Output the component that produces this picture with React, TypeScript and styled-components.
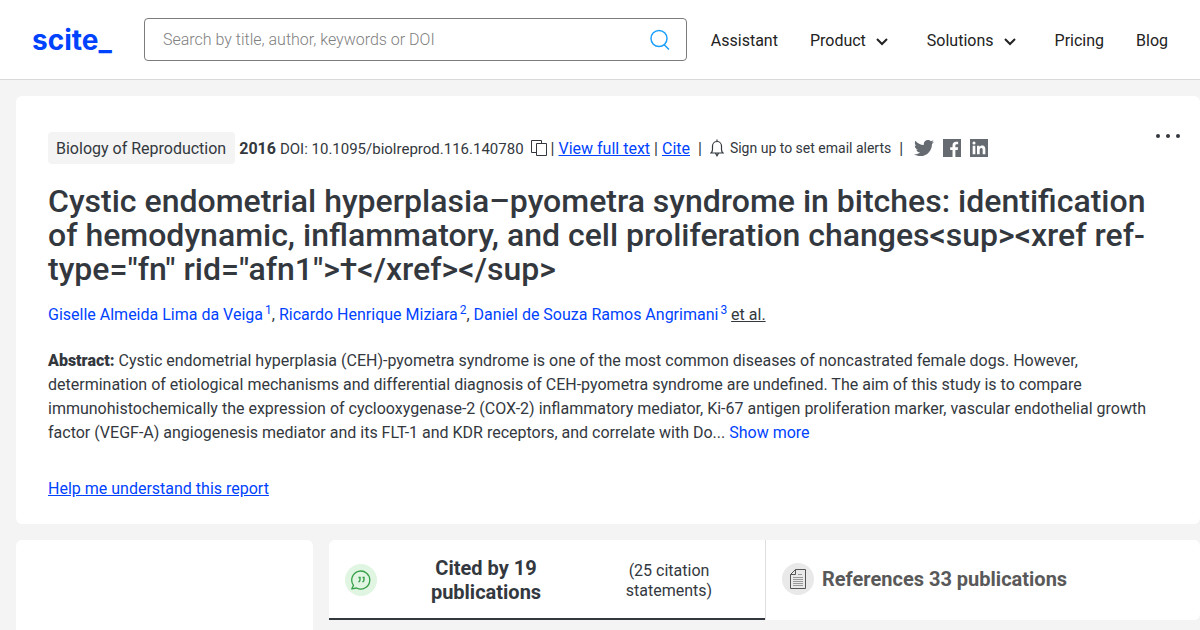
import React from 'react';
import styled, { createGlobalStyle } from 'styled-components';
import { FaTwitter } from 'react-icons/fa';

const GlobalStyle = createGlobalStyle`
  * { box-sizing: border-box; }
  body {
    margin: 0;
    background: #f4f4f4;
    color: #33383e;
    font-family: Roboto, "Liberation Sans", sans-serif;
    font-size: 16px;
    line-height: 24px;
  }
  a { color: #0043ff; text-decoration: none; }
  button { font: inherit; color: inherit; background: none; border: 0; padding: 0; cursor: pointer; }
  svg { display: block; flex: none; }
`;

const Page = styled.div`
  overflow-x: hidden;
`;

const Header = styled.header`
  display: flex;
  align-items: center;
  height: 80px;
  padding: 0 32px;
  background: #fff;
  border-bottom: 1px solid #d9d9d9;
`;

const Logo = styled.a`
  flex: none;
  width: 112px;
  font-family: Inter, sans-serif;
  font-size: 28px;
  line-height: 40px;
  font-weight: 700;
`;

const Search = styled.form`
  display: flex;
  align-items: center;
  flex: 1;
  min-width: 0;
  height: 43px;
  padding: 0 16px 0 18px;
  border: 1px solid #7c7c7c;
  border-radius: 4px;
`;

const SearchInput = styled.input`
  flex: 1;
  min-width: 0;
  padding: 0;
  border: 0;
  outline: 0;
  background: none;
  font: inherit;
  font-weight: 300;
  color: #33383e;
  &::placeholder { color: #808080; opacity: 1; }
`;

const Nav = styled.nav`
  display: flex;
  align-items: center;
  gap: 32px;
  margin-left: 24px;
  padding-top: 2px;
`;

const NavLink = styled.a`
  color: #222;
`;

const NavMenu = styled.button`
  display: flex;
  align-items: center;
  gap: 8px;
  && { color: #222; margin-right: 5px; }
`;

const Main = styled.main`
  display: flex;
  flex-direction: column;
  gap: 16px;
  padding: 16px 0 0 16px;
`;

const Card = styled.section`
  background: #fff;
  border-radius: 6px;
`;

const Paper = styled(Card)`
  padding: 36px 32px 23px;
`;

const TopRow = styled.div`
  display: flex;
  align-items: flex-start;
  justify-content: space-between;
  margin-right: -14px;
`;

const Meta = styled.div`
  display: flex;
  align-items: center;
  gap: 4px;
  white-space: nowrap;
`;

const Journal = styled.span`
  padding: 5px 9px 3px 8px;
  border-radius: 4px;
  background: #f4f4f4;
`;

const MetaText = styled.span`
  padding-top: 2px;
`;

const Year = styled(MetaText)`
  font-weight: 700;
`;

const Doi = styled(MetaText)`
  font-size: 15px;
`;

const TextLink = styled.a`
  text-decoration: underline;
`;

const CopyButton = styled.button`
  margin-left: 3px;
`;

const Alerts = styled.button`
  display: flex;
  align-items: center;
  gap: 6px;
  margin: 0 4px;
  && { font-size: 14px; }
`;

const Social = styled.div`
  display: flex;
  align-items: center;
  gap: 9px;
  margin-left: 7px;
  a { color: #656b70; }
`;

const Title = styled.h1`
  margin: 20px 0 0;
  font-size: 32px;
  line-height: 34px;
  font-weight: 500;
`;

const Authors = styled.p`
  margin: 17px 0 0;
  sup { font-size: 12px; line-height: 0; margin-left: 2px; }
`;

const EtAl = styled.button`
  && { text-decoration: underline; }
`;

const Abstract = styled.p`
  margin: 22px 0 0;
  b { font-weight: 900; }
`;

const Help = styled.p`
  margin: 32px 0 0;
`;

const Columns = styled.div`
  display: flex;
  align-items: flex-start;
  gap: 16px;
`;

const Sidebar = styled(Card)`
  flex: none;
  width: 297px;
  height: 90px;
  border-radius: 6px 6px 0 0;
`;

const Tabs = styled(Card)`
  display: flex;
  flex: 1;
  height: 80px;
  overflow: hidden;
  border-radius: 6px 6px 6px 0;
`;

const Tab = styled.button<{ $active?: boolean }>`
  display: flex;
  align-items: center;
  flex: ${(p) => (p.$active ? '0 0 437px' : '1')};
  gap: ${(p) => (p.$active ? '0' : '8px')};
  && {
    padding: ${(p) => (p.$active ? '0 16px' : '0 16px 2px')};
    color: ${(p) => (p.$active ? '#33383e' : '#595959')};
    border-right: ${(p) => (p.$active ? '1px solid #dedede' : '0')};
    box-shadow: ${(p) => (p.$active ? 'inset 0 -2px #33383e' : 'none')};
  }
`;

const TabIcon = styled.span<{ $tone: string }>`
  display: grid;
  place-items: center;
  flex: none;
  width: 32px;
  height: 32px;
  border-radius: 50%;
  background: ${(p) => p.$tone};
`;

const TabTitle = styled.strong<{ $wide?: boolean }>`
  flex: ${(p) => (p.$wide ? '0 0 218px' : 'none')};
  padding: ${(p) => (p.$wide ? '0 48px' : '0')};
  font-size: 20px;
  line-height: 24px;
  font-weight: 700;
`;

const TabNote = styled.span`
  flex: 1;
  padding: 2px 26px 0 20px;
  line-height: 20px;
`;

const Chevron = () => (
  <svg width="16" height="16" viewBox="0 0 16 16" fill="none" stroke="currentColor" strokeWidth="2" aria-hidden="true">
    <path d="M3 6l5 5 5-5" />
  </svg>
);

export default function App() {
  return (
    <Page>
      <GlobalStyle />
      <Header>
        <Logo href="#">scite_</Logo>
        <Search role="search">
          <SearchInput type="text" aria-label="Search" placeholder="Search by title, author, keywords or DOI" />
          <button type="button" aria-label="Submit search">
            <svg width="20" height="22" viewBox="0 0 20 22" fill="none" stroke="#1a9fff" strokeWidth="1.5">
              <circle cx="9" cy="9.5" r="8" />
              <path d="M14 15.5l5 5" />
            </svg>
          </button>
        </Search>
        <Nav>
          <NavLink href="#">Assistant</NavLink>
          <NavMenu type="button">Product <Chevron /></NavMenu>
          <NavMenu type="button">Solutions <Chevron /></NavMenu>
          <NavLink href="#">Pricing</NavLink>
          <NavLink href="#">Blog</NavLink>
        </Nav>
      </Header>
      <Main>
        <Paper>
          <TopRow>
            <Meta>
              <Journal>Biology of Reproduction</Journal>
              <Year>2016</Year>
              <Doi>DOI: 10.1095/biolreprod.116.140780</Doi>
              <CopyButton type="button" aria-label="Copy DOI">
                <svg width="16" height="16" viewBox="0 0 16 16" fill="none" stroke="#33383e">
                  <path d="M5 12.5H.5V.5h10V3" />
                  <path d="M5.5 3.5h10v12h-10z" />
                </svg>
              </CopyButton>
              <MetaText>|</MetaText>
              <MetaText><TextLink href="#">View full text</TextLink></MetaText>
              <MetaText>|</MetaText>
              <MetaText><TextLink href="#">Cite</TextLink></MetaText>
              <MetaText>&nbsp;|</MetaText>
              <Alerts type="button">
                <svg width="14" height="18" viewBox="0 0 14 18" fill="none" stroke="#33383e" strokeWidth="1.2">
                  <path d="M1 14c1.2-1 1.5-2 1.5-3.5V7a4.5 4.5 0 0 1 9 0v3.5c0 1.5.3 2.5 1.5 3.5zM7 .5v2M5.5 14.3L7 16.8l1.5-2.5" />
                </svg>
                Sign up to set email alerts
              </Alerts>
              <MetaText>|</MetaText>
              <Social>
                <a href="#" aria-label="Twitter"><FaTwitter size={20} /></a>
                <a href="#" aria-label="Facebook">
                  <svg width="18" height="18" viewBox="0 0 24 24">
                    <path fill="currentColor" d="M0 0h24v24H0z" />
                    <path fill="#fff" d="M12.7 24v-9.3H9.6v-3.6h3.1V8.5c0-3.1 1.9-4.8 4.7-4.8 1.3 0 2.5.1 2.8.1V7h-1.9c-1.5 0-1.8.8-1.8 1.8v2.3h3.6l-.5 3.6h-3.1V24z" />
                  </svg>
                </a>
                <a href="#" aria-label="LinkedIn">
                  <svg width="18" height="18" viewBox="0 0 24 24">
                    <path fill="currentColor" d="M0 0h24v24H0z" />
                    <path fill="#fff" d="M20.447 20.452h-3.554v-5.569c0-1.328-.027-3.037-1.852-3.037-1.853 0-2.136 1.445-2.136 2.939v5.667H9.351V9h3.414v1.561h.046c.477-.9 1.637-1.85 3.37-1.85 3.601 0 4.267 2.37 4.267 5.455v6.286zM5.337 7.433a2.062 2.062 0 1 1 0-4.128 2.062 2.062 0 0 1 0 4.128zm1.782 13.019H3.555V9h3.564v11.452z" />
                  </svg>
                </a>
              </Social>
            </Meta>
            <button type="button" aria-label="More options">
              <svg width="28" height="8" viewBox="0 0 28 8" fill="#33383e">
                <circle cx="4" cy="4" r="2" />
                <circle cx="14" cy="4" r="2" />
                <circle cx="24" cy="4" r="2" />
              </svg>
            </button>
          </TopRow>
          <Title>
            {'Cystic endometrial hyperplasia–pyometra syndrome in bitches: identification of hemodynamic, inflammatory, and cell proliferation changes<sup><xref ref-type="fn" rid="afn1">†</xref></sup>'}
          </Title>
          <Authors>
            <a href="#">Giselle Almeida Lima da Veiga<sup>1</sup></a>, <a href="#">Ricardo Henrique Miziara<sup>2</sup></a>,{' '}
            <a href="#">Daniel de Souza Ramos Angrimani<sup>3</sup></a> <EtAl type="button">et al.</EtAl>
          </Authors>
          <Abstract>
            <b>Abstract:</b> Cystic endometrial hyperplasia (CEH)-pyometra syndrome is one of the most common diseases of
            noncastrated female dogs. However, determination of etiological mechanisms and differential diagnosis of
            CEH-pyometra syndrome are undefined. The aim of this study is to compare immunohistochemically the expression
            of cyclooxygenase-2 (COX-2) inflammatory mediator, Ki-67 antigen proliferation marker, vascular endothelial
            growth factor (VEGF-A) angiogenesis mediator and its FLT-1 and KDR receptors, and correlate with Do...{' '}
            <a href="#">Show more</a>
          </Abstract>
          <Help><TextLink href="#">Help me understand this report</TextLink></Help>
        </Paper>
        <Columns>
          <Sidebar as="aside" />
          <Tabs>
            <Tab type="button" $active>
              <TabIcon $tone="#e0f5e2">
                <svg width="20" height="20" viewBox="0 0 20 20" fill="none" stroke="#35a048" strokeWidth="1.3">
                  <path d="M.8 18.8l1.7-3.4A9 9 0 1 1 5.5 18z" strokeLinejoin="round" />
                  <path d="M7.5 7.5H9v2.2c0 1.2-.6 1.9-1.5 2.3M11.5 7.5H13v2.2c0 1.2-.6 1.9-1.5 2.3" strokeWidth="1.4" />
                </svg>
              </TabIcon>
              <TabTitle $wide>Cited by 19 publications</TabTitle>
              <TabNote>(25 citation statements)</TabNote>
            </Tab>
            <Tab type="button">
              <TabIcon $tone="#e9e9e9">
                <svg width="16" height="20" viewBox="0 0 16 20" fill="none" stroke="#555">
                  <path d="M5.5.5h10v19H.5v-14zV5.5H.5" />
                  <path d="M8 5.5h4M3 8.5h10M3 10.5h10M3 12.5h10M3 14.5h10M3 16.5h10" stroke="#999" />
                </svg>
              </TabIcon>
              <TabTitle>References 33 publications</TabTitle>
            </Tab>
          </Tabs>
        </Columns>
      </Main>
    </Page>
  );
}
